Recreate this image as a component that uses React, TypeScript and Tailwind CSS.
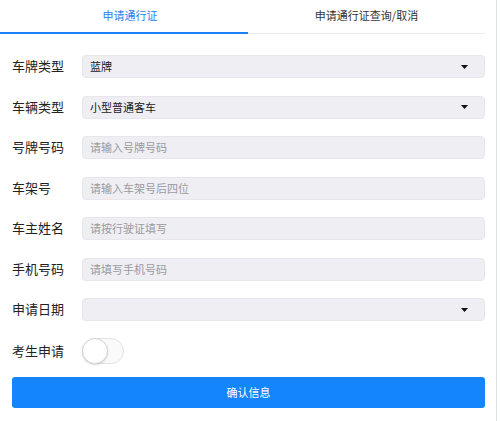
import React from "react";

const font = { fontFamily: '"Noto Sans CJK SC", "Noto Sans", sans-serif' };

function Arrow() {
  return (
    <svg width="7" height="4" viewBox="0 0 7 4" className="mr-[16px] shrink-0">
      <path d="M0 0 L7 0 L3.5 4 Z" fill="#111" />
    </svg>
  );
}

function Row({ label, children }: { label: string; children: React.ReactNode }) {
  return (
    <div className="flex items-center h-[23px]">
      <div className="w-[70px] shrink-0 text-[13px] text-[#222] leading-none -translate-y-px">{label}</div>
      {children}
    </div>
  );
}

function Select({ value }: { value?: string }) {
  return (
    <div className="flex-1 h-[23px] rounded-[4px] bg-[#eeeef3] border border-[#e6e6ec] flex items-center justify-between pl-[7px]">
      <span className="text-[11px] text-[#222] leading-none">{value ?? ""}</span>
      <Arrow />
    </div>
  );
}

function Input({ placeholder }: { placeholder: string }) {
  return (
    <div className="flex-1 h-[23px] rounded-[4px] bg-[#eeeef3] border border-[#e6e6ec] flex items-center pl-[7px]">
      <span className="text-[11px] text-[#9a9aa0] leading-none">{placeholder}</span>
    </div>
  );
}

export default function App() {
  return (
    <div className="w-[500px] h-[421px] bg-white flex" style={font}>
      <div className="w-[497px] h-full border-r border-[#dde3ea]">
        <div className="w-[485px]">
          <div className="flex h-[34px]">
            <div className="w-[248px] flex items-center justify-center pl-[12px] border-b-[2px] border-[#1a82f7] pb-[2px]">
              <span className="text-[11px] text-[#2a7ff0] leading-none">申请通行证</span>
            </div>
            <div className="flex-1 flex items-center justify-center border-b border-[#ebebeb] pb-[2px]">
              <span className="text-[11px] text-[#333] leading-none">申请通行证查询/取消</span>
            </div>
          </div>
          <div className="pl-[12px] pt-[21px] flex flex-col gap-[17.5px]">
            <Row label="车牌类型">
              <Select value="蓝牌" />
            </Row>
            <Row label="车辆类型">
              <Select value="小型普通客车" />
            </Row>
            <Row label="号牌号码">
              <Input placeholder="请输入号牌号码" />
            </Row>
            <Row label="车架号">
              <Input placeholder="请输入车架号后四位" />
            </Row>
            <Row label="车主姓名">
              <Input placeholder="请按行驶证填写" />
            </Row>
            <Row label="手机号码">
              <Input placeholder="请填写手机号码" />
            </Row>
            <Row label="申请日期">
              <Select />
            </Row>
          </div>
          <div className="pl-[12px] mt-[17px] flex items-center h-[26px]">
            <div className="w-[70px] shrink-0 text-[13px] text-[#222] leading-none -translate-y-px">考生申请</div>
            <div className="relative w-[42px] h-[26px] rounded-full border border-[#e4e4e4] bg-[#fafafa]">
              <div className="absolute left-[-1px] top-[-1px] w-[26px] h-[26px] rounded-full bg-white border border-[#d6d6d6] shadow-[0_1px_2px_rgba(0,0,0,0.15)]" />
            </div>
          </div>
          <div className="pl-[12px] mt-[13px]">
            <div className="h-[31px] rounded-[3px] bg-[#1485fc] flex items-center justify-center">
              <span className="text-[11px] text-white leading-none">确认信息</span>
            </div>
          </div>
        </div>
      </div>
    </div>
  );
}
